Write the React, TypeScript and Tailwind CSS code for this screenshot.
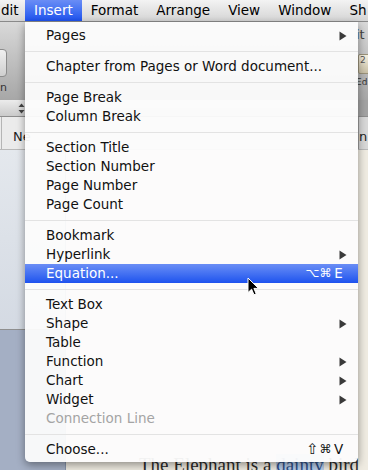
import React from "react";

type Item = {
  label?: string;
  arrow?: boolean;
  shortcut?: string[];
  disabled?: boolean;
  active?: boolean;
  sep?: boolean;
};

const ITEMS: Item[] = [
  { label: "Pages", arrow: true },
  { sep: true },
  { label: "Chapter from Pages or Word document..." },
  { sep: true },
  { label: "Page Break" },
  { label: "Column Break" },
  { sep: true },
  { label: "Section Title" },
  { label: "Section Number" },
  { label: "Page Number" },
  { label: "Page Count" },
  { sep: true },
  { label: "Bookmark" },
  { label: "Hyperlink", arrow: true },
  { label: "Equation...", shortcut: ["⌥", "⌘", "E"], active: true },
  { sep: true },
  { label: "Text Box" },
  { label: "Shape", arrow: true },
  { label: "Table" },
  { label: "Function", arrow: true },
  { label: "Chart", arrow: true },
  { label: "Widget", arrow: true },
  { label: "Connection Line", disabled: true },
  { sep: true },
  { label: "Choose...", shortcut: ["⇧", "⌘", "V"] },
];

const BAR = ["Format", "Arrange", "View", "Window"];

function Arrow() {
  return (
    <svg width="8" height="10" viewBox="0 0 8 10">
      <polygon points="0.5,0.5 7.5,5 0.5,9.5" fill="#3a3a3a" />
    </svg>
  );
}

function MenuRow({ item }: { item: Item }) {
  if (item.sep) {
    return (
      <div className="h-[12px] flex items-center">
        <div className="h-px w-full bg-[#e3e3e3]" />
      </div>
    );
  }
  const color = item.active
    ? "text-white bg-gradient-to-b from-[#6a8df5] to-[#1d51ee]"
    : item.disabled
      ? "text-[#a4a4a4]"
      : "text-[#111]";
  return (
    <div className={`h-[19px] flex items-center pl-[21px] pr-[11px] leading-[19px] ${color}`}>
      <span className="flex-1">{item.label}</span>
      {item.shortcut && (
        <span className="flex mr-[2px]">
          {item.shortcut.map((k) => (
            <span
              key={k}
              className={`w-[13px] flex justify-center ${k === "⇧" ? "text-[15px]" : k === "⌘" || k === "⌥" ? "text-[12px]" : ""}`}
            >
              {k}
            </span>
          ))}
        </span>
      )}
      {item.arrow && <Arrow />}
    </div>
  );
}

export default function App() {
  return (
    <div className="relative w-[368px] h-[470px] overflow-hidden bg-[#a4afc4] font-['DejaVu_Sans',sans-serif] text-[13.5px]">
      {/* menu bar */}
      <div className="h-[22px] flex bg-gradient-to-b from-[#f3f3f3] to-[#d5d5d5] border-b border-[#8a8a8a] text-black leading-[21px]">
        <div className="w-[25px] shrink-0 pl-[1px]">dit</div>
        <div className="shrink-0 px-[9px] text-white bg-gradient-to-b from-[#6a8df5] to-[#1d51ee]">Insert</div>
        {BAR.map((b) => (
          <div key={b} className="shrink-0 px-[9px]">
            {b}
          </div>
        ))}
        <div className="shrink-0 pl-[9px]">Sh</div>
      </div>

      {/* window toolbar */}
      <div className="h-[78px] flex bg-gradient-to-b from-[#d9d9d9] to-[#a7a7a7]">
        <div className="w-[40px] flex flex-col">
          <div className="mt-[27px] ml-[-22px] w-[29px] h-[28px] rounded-[4px] border border-[#8c8c8c] bg-gradient-to-b from-[#f0f0f0] to-[#cfcfcf]" />
          <div className="mt-[5px] text-[11px] text-[#333] leading-[12px]">n</div>
        </div>
        <div className="flex-1" />
        <div className="w-[12px] flex flex-col">
          <div className="mt-[6px] text-[13px] text-[#444] leading-[14px]">it</div>
          <div className="mt-[12px] ml-[2px] w-[14px] h-[20px] rounded-[2px] bg-gradient-to-b from-[#f4efdf] to-[#c8bfa5] border border-[#9a927a] text-[9px] leading-[10px] text-[#555] pl-[1px]">2</div>
          <div className="mt-[2px] text-[9px] text-[#333] leading-[12px]">Ed</div>
        </div>
      </div>

      {/* format bar */}
      <div className="h-[17px] flex items-center bg-gradient-to-b from-[#ececec] to-[#cacaca] border-b border-[#8d8d8d]">
        <div className="w-[18px]" />
        <svg width="7" height="11" viewBox="0 0 7 11">
          <polygon points="3.5,0.5 6.5,4 0.5,4" fill="#444" />
          <polygon points="3.5,10.5 6.5,7 0.5,7" fill="#444" />
        </svg>
        <div className="flex-1" />
        <div className="w-[10px] h-full bg-[#a2a2a2]" />
      </div>

      {/* tab strip */}
      <div className="h-[33px] flex bg-[#ebebeb] border-b border-[#b9b9b9]">
        <div className="w-[2px] h-full border-r border-[#b5b5b5]" />
        <div className="pl-[11px] pt-[12px] text-[13px] text-[#222] leading-[16px]">Ne</div>
        <div className="flex-1" />
        <div className="w-[10px] h-full bg-[#d8d8d8] border-l border-[#9b9b9b] pt-[12px] text-[13px] text-[#222] leading-[16px]">n</div>
      </div>

      {/* main */}
      <div className="h-[320px] flex">
        <div className="w-[66px] flex flex-col border-r border-[#8794aa]">
          <div className="h-[180px] bg-gradient-to-b from-[#e4e8ed] to-[#d4dae3] border-b border-[#8f8f8f]" />
          <div className="flex-1 bg-[#a4afc4]" />
        </div>
        <div className="flex-1 bg-[#efebe1] pl-[73px] pt-[305px] font-['Liberation_Serif',serif] text-[19px] leading-[20px] text-[#2a2a2a] whitespace-nowrap">
          The Elephant is a <span className="bg-[#b8cce8] text-[#2f4f86]">dainty</span> bird
        </div>
      </div>

      {/* Insert menu */}
      <div className="absolute left-[25px] top-[22px] w-[333px] pt-[4px] pb-[3px] bg-[#fcfcfc]/95 rounded-b-[5px] shadow-[0_3px_9px_rgba(0,0,0,0.4)]">
        {ITEMS.map((it, i) => (
          <MenuRow key={i} item={it} />
        ))}
      </div>

      {/* mouse pointer */}
      <svg className="absolute left-[247px] top-[277px]" width="14" height="20" viewBox="0 0 14 20">
        <path d="M1 1 L1 15.5 L4.6 12.2 L7 17.8 L9.2 16.8 L6.9 11.4 L11.5 11.4 Z" fill="#000" stroke="#fff" strokeWidth="1" strokeLinejoin="round" />
      </svg>
    </div>
  );
}
